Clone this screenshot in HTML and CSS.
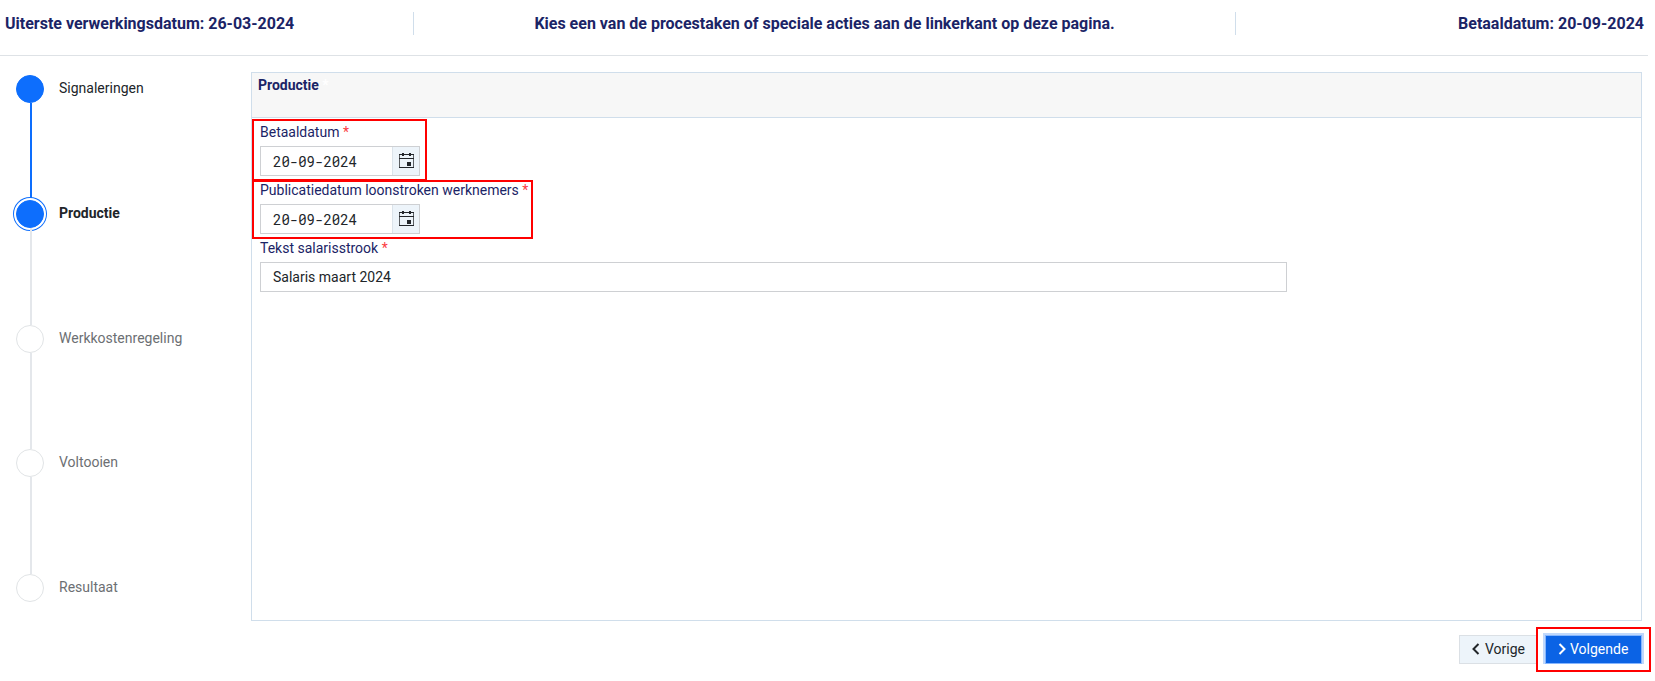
FILE: index.html
```html
<!DOCTYPE html>
<html lang="nl">

<head>
    <meta charset="UTF-8">
    <meta name="viewport" content="width=device-width, initial-scale=1.0">
    <title>Productie</title>
    <link rel="stylesheet" href="styles.css">
</head>

<body>
    <header class="topbar">
        <div class="info">Uiterste verwerkingsdatum: 26-03-2024</div>
        <div class="info center">Kies een van de procestaken of speciale acties aan de linkerkant op deze pagina.</div>
        <div class="info right">Betaaldatum: 20-09-2024</div>
    </header>

    <div class="content">
        <!-- wizard steps -->
        <ul class="steps">
            <li class="step done"><span class="dot"></span><span class="name">Signaleringen</span></li>
            <li class="step active"><span class="dot"></span><span class="name">Productie</span></li>
            <li class="step"><span class="dot"></span><span class="name">Werkkostenregeling</span></li>
            <li class="step"><span class="dot"></span><span class="name">Voltooien</span></li>
            <li class="step"><span class="dot"></span><span class="name">Resultaat</span></li>
        </ul>

        <main class="main">
            <section class="panel">
                <h2 class="panel-title">Productie <span>*</span></h2>

                <div class="field mark mark-pay">
                    <label for="pay">Betaaldatum <span class="req">*</span></label>
                    <div class="date">
                        <input type="text" id="pay" value="20-09-2024">
                        <button class="pick" aria-label="Kalender">
                            <svg width="16" height="16" viewBox="0 0 16 16" shape-rendering="crispEdges">
                                <path fill="none" stroke="#5c6064" d="M.5 1.5h14v13H.5z"/>
                                <path fill="#23262b" d="M0 1h15v1H0zM0 5h15v1H0zM0 14h15v1H0zM3 0h2v3H3zM10 0h2v3h-2zM8 9h4v4H8z"/>
                            </svg>
                        </button>
                    </div>
                </div>

                <div class="field mark mark-pub">
                    <label for="pub">Publicatiedatum loonstroken werknemers <span class="req">*</span></label>
                    <div class="date">
                        <input type="text" id="pub" value="20-09-2024">
                        <button class="pick" aria-label="Kalender">
                            <svg width="16" height="16" viewBox="0 0 16 16" shape-rendering="crispEdges">
                                <path fill="none" stroke="#5c6064" d="M.5 1.5h14v13H.5z"/>
                                <path fill="#23262b" d="M0 1h15v1H0zM0 5h15v1H0zM0 14h15v1H0zM3 0h2v3H3zM10 0h2v3h-2zM8 9h4v4H8z"/>
                            </svg>
                        </button>
                    </div>
                </div>

                <div class="field">
                    <label for="txt">Tekst salarisstrook <span class="req">*</span></label>
                    <input class="text" type="text" id="txt" value="Salaris maart 2024">
                </div>
            </section>

            <div class="buttons">
                <button class="btn">
                    <svg width="8" height="12" viewBox="0 0 8 12"><path d="M6.5 1 1.5 6l5 5"/></svg>Vorige
                </button>
                <div class="mark-next">
                    <button class="btn primary">
                        <svg width="8" height="12" viewBox="0 0 8 12"><path d="M1.5 1l5 5-5 5"/></svg>Volgende
                    </button>
                </div>
            </div>
        </main>
    </div>
</body>

</html>
```

FILE: styles.css
```css
*, *::before, *::after {
    box-sizing: border-box;
}
body {
    margin: 0;
    background: #fff;
    color: #212529;
    font-family: Roboto, "Liberation Sans", sans-serif;
    font-size: 14px;
}
input, button {
    font: inherit;
    color: inherit;
}

/* top bar */
.topbar {
    display: flex;
    width: 1648px;
    height: 56px;
    padding: 12px 4px 0 5px;
    border-bottom: 1px solid #dee2e6;
    color: #1b2466;
    font-size: 16px;
    font-weight: 700;
}
.info {
    width: 408px;
    height: 23px;
    line-height: 23px;
}
.info.center {
    width: 823px;
    text-align: center;
    border-left: 1px solid #d0deeb;
    border-right: 1px solid #d0deeb;
}
.info.right {
    text-align: right;
}

.content {
    display: flex;
    padding-top: 16px;
}

/* steps */
.steps {
    width: 251px;
    margin: 0;
    padding: 3px 0 0 16px;
    list-style: none;
}
.step {
    position: relative;
    display: flex;
    height: 124.75px;
    color: #6c6f73;
}
.step::before {
    content: "";
    position: absolute;
    left: 14px;
    top: 28px;
    bottom: 0;
    width: 2px;
    background: #e4e7eb;
}
.step:last-child::before {
    display: none;
}
.dot {
    flex: none;
    width: 28px;
    height: 28px;
    margin-right: 15px;
    border: 1px solid #e1e4e6;
    border-radius: 50%;
    background: #fff;
}
.name {
    line-height: 27px;
}
.done, .active {
    color: #212529;
}
.done .dot, .active .dot {
    background: #0d6efd;
    border-color: #0d6efd;
}
.done::before {
    background: #0d6efd;
}
.active .dot {
    box-shadow: 0 0 0 2px #fff, 0 0 0 3px #0d6efd;
}
.active .name {
    font-weight: 700;
}

/* panel */
.main {
    width: 1400px;
}
.panel {
    width: 1391px;
    height: 549px;
    border: 1px solid #d0deeb;
}
.panel-title {
    height: 45px;
    margin: 0;
    padding-left: 6px;
    background: #f7f7f7;
    border-bottom: 1px solid #d0deeb;
    color: #1b2466;
    font-size: 14px;
    font-weight: 700;
    line-height: 25px;
}
.panel-title span {
    color: #fff;
}
.field {
    height: 58px;
    padding: 2px 0 0 8px;
}
.field label {
    display: block;
    height: 26px;
    line-height: 24px;
    color: #1b2466;
}
.req {
    color: #fb3b43;
}
.date {
    display: flex;
    width: 160px;
    height: 30px;
    border: 1px solid #ced0d3;
}
.date input {
    width: 131px;
    padding: 0 0 0 12px;
    border: 0;
    outline: none;
    font-family: "Roboto Mono", "DejaVu Sans Mono", monospace;
}
.pick {
    display: flex;
    flex: 1;
    padding: 6px 0 0 6px;
    border: 0;
    border-left: 1px solid #dbe3ea;
    background: #edf4fa;
}
.text {
    display: block;
    width: 1027px;
    height: 30px;
    padding: 0 12px;
    border: 1px solid #ced0d3;
}

/* red outlines */
.mark, .mark-next {
    position: relative;
}
.mark::after, .mark-next::after {
    content: "";
    position: absolute;
    border: 2px solid #f00;
    pointer-events: none;
}
.mark-pay::after {
    left: 0;
    top: 1px;
    width: 175px;
    height: 62px;
}
.mark-pub::after {
    left: 0;
    top: 4px;
    width: 281px;
    height: 59px;
}
.mark-next::after {
    left: -9px;
    top: -8px;
    width: 115px;
    height: 45px;
}

/* buttons */
.buttons {
    display: flex;
    gap: 8px;
    padding: 14px 0 0 208px;
    margin-left: 1000px;
}
.btn {
    display: flex;
    align-items: center;
    width: 78px;
    height: 29px;
    padding: 0 0 1px 12px;
    border: 1px solid #dbe0e5;
    background: #edf4fa;
    white-space: nowrap;
}
.btn svg {
    margin-right: 5px;
    fill: none;
    stroke: currentColor;
    stroke-width: 2;
}
.btn.primary {
    width: 97px;
    border-color: #86b6fe;
    background: #0b63e5;
    color: #fff;
    box-shadow: 0 0 0 2px #c0d8fb;
    clip-path: inset(-2px -2px 0 -2px);
}
.btn.primary svg {
    margin-right: 4px;
}
```
